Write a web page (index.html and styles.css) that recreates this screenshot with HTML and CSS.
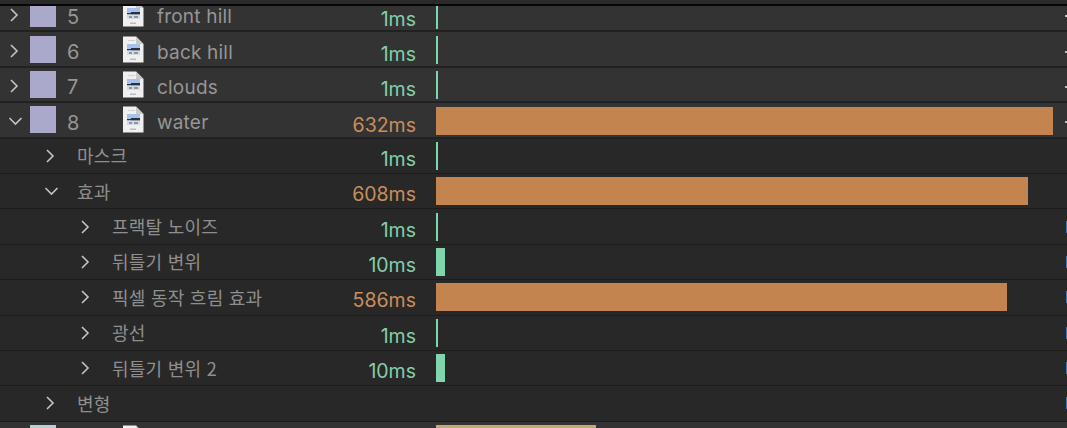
FILE: index.html
```html
<!DOCTYPE html>
<html lang="ko">
<head>
<meta charset="UTF-8">
<meta name="viewport" content="width=device-width, initial-scale=1.0">
<title>Render timing</title>
<link rel="stylesheet" href="styles.css">
</head>
<body>

<!-- shared icons -->
<svg class="defs" width="0" height="0">
  <symbol id="file" viewBox="0 0 22 27">
    <path d="M1 0.5H14L21.5 8V26.5H1Z" fill="#f0f0f0"/>
    <path d="M14 0.5V8H21.5Z" fill="#c9c9c9"/>
    <rect x="6" y="4" width="7" height="1" fill="#d2d2d2"/>
    <rect x="5" y="8" width="13" height="5" fill="#a6c2ec"/>
    <rect x="5" y="13" width="13" height="1.5" fill="#2a3040"/>
    <rect x="9" y="12" width="9" height="2.5" fill="#2a3040"/>
    <rect x="5" y="14.5" width="13" height="4.5" fill="#d5dbe4"/>
    <rect x="7" y="16" width="3" height="2" fill="#8e96a3"/>
    <rect x="12" y="16" width="4" height="2" fill="#8e96a3"/>
    <rect x="8" y="22.5" width="6" height="1.5" fill="#bcbcbc"/>
  </symbol>
  <symbol id="closed" viewBox="0 0 16 16">
    <path d="M5 2L11 8L5 14" fill="none" stroke="currentColor" stroke-width="1.6"/>
  </symbol>
  <symbol id="open" viewBox="0 0 16 16" overflow="visible">
    <path d="M3.5 5L9.5 11L15.5 5" fill="none" stroke="currentColor" stroke-width="1.6"/>
  </symbol>
</svg>

<div class="top-strip"></div>

<div class="rows">
  <div class="row layer">
    <div class="name">
      <svg class="twirl"><use href="#closed"/></svg>
      <span class="swatch"></span><span class="num">5</span>
      <svg class="file"><use href="#file"/></svg>
      <span class="label">front hill</span>
    </div>
    <div class="time fast">1ms</div>
    <div class="track"><span class="bar fast" style="width:2px"></span><span class="tick"></span></div>
  </div>
  <div class="row layer">
    <div class="name">
      <svg class="twirl"><use href="#closed"/></svg>
      <span class="swatch"></span><span class="num">6</span>
      <svg class="file"><use href="#file"/></svg>
      <span class="label">back hill</span>
    </div>
    <div class="time fast">1ms</div>
    <div class="track"><span class="bar fast" style="width:2px"></span><span class="tick"></span></div>
  </div>
  <div class="row layer">
    <div class="name">
      <svg class="twirl"><use href="#closed"/></svg>
      <span class="swatch"></span><span class="num">7</span>
      <svg class="file"><use href="#file"/></svg>
      <span class="label">clouds</span>
    </div>
    <div class="time fast">1ms</div>
    <div class="track"><span class="bar fast" style="width:2px"></span><span class="tick"></span></div>
  </div>
  <div class="row layer">
    <div class="name">
      <svg class="twirl"><use href="#open"/></svg>
      <span class="swatch"></span><span class="num">8</span>
      <svg class="file"><use href="#file"/></svg>
      <span class="label">water</span>
    </div>
    <div class="time slow">632ms</div>
    <div class="track"><span class="bar slow" style="width:617px"></span><span class="tick"></span></div>
  </div>

  <div class="row sub depth1">
    <div class="name">
      <svg class="twirl"><use href="#closed"/></svg>
      <span class="label">마스크</span>
    </div>
    <div class="time fast">1ms</div>
    <div class="track"><span class="bar fast" style="width:2px"></span></div>
  </div>
  <div class="row sub depth1">
    <div class="name">
      <svg class="twirl"><use href="#open"/></svg>
      <span class="label">효과</span>
    </div>
    <div class="time slow">608ms</div>
    <div class="track"><span class="bar slow" style="width:592px"></span></div>
  </div>
  <div class="row sub depth2">
    <div class="name">
      <svg class="twirl"><use href="#closed"/></svg>
      <span class="label">프랙탈 노이즈</span>
    </div>
    <div class="time fast">1ms</div>
    <div class="track"><span class="bar fast" style="width:2px"></span><span class="tick blue"></span></div>
  </div>
  <div class="row sub depth2">
    <div class="name">
      <svg class="twirl"><use href="#closed"/></svg>
      <span class="label">뒤틀기 변위</span>
    </div>
    <div class="time fast">10ms</div>
    <div class="track"><span class="bar fast" style="width:9px"></span><span class="tick blue"></span></div>
  </div>
  <div class="row sub depth2">
    <div class="name">
      <svg class="twirl"><use href="#closed"/></svg>
      <span class="label">픽셀 동작 흐림 효과</span>
    </div>
    <div class="time slow">586ms</div>
    <div class="track"><span class="bar slow" style="width:571px"></span><span class="tick blue"></span></div>
  </div>
  <div class="row sub depth2">
    <div class="name">
      <svg class="twirl"><use href="#closed"/></svg>
      <span class="label">광선</span>
    </div>
    <div class="time fast">1ms</div>
    <div class="track"><span class="bar fast" style="width:2px"></span><span class="tick blue"></span></div>
  </div>
  <div class="row sub depth2">
    <div class="name">
      <svg class="twirl"><use href="#closed"/></svg>
      <span class="label">뒤틀기 변위 2</span>
    </div>
    <div class="time fast">10ms</div>
    <div class="track"><span class="bar fast" style="width:9px"></span><span class="tick blue"></span></div>
  </div>
  <div class="row sub depth1">
    <div class="name">
      <svg class="twirl"><use href="#closed"/></svg>
      <span class="label">변형</span>
    </div>
    <div class="time"></div>
    <div class="track"><span class="tick blue"></span></div>
  </div>

  <!-- next layer, cut off by the window -->
  <div class="row layer next">
    <div class="name">
      <svg class="twirl"><use href="#closed"/></svg>
      <span class="swatch"></span><span class="num"></span>
      <svg class="file"><use href="#file"/></svg>
    </div>
    <div class="time"></div>
    <div class="track"><span class="bar tan" style="width:160px"></span></div>
  </div>
</div>

</body>
</html>
```

FILE: styles.css
```css
html, body {
  margin: 0;
  padding: 0;
  height: 100%;
  overflow: hidden;
  background-color: #2b2b2b;
}
body {
  display: flex;
  flex-direction: column;
  font-family: Inter, "Liberation Sans", "Noto Sans CJK KR", sans-serif;
}
.defs {
  position: absolute;
}
.top-strip {
  flex: none;
  height: 4px;
  background-color: #2a2a2a;
  border-bottom: 2px solid #060606;
}
.rows {
  flex: 1;
  overflow: hidden;
}
.row {
  display: flex;
  align-items: center;
  box-sizing: border-box;
  height: 35.4px;
  border-bottom: 2px solid #212121;
}
.row:first-child {
  margin-top: -9px;
}
.layer {
  background-color: #333333;
}
.sub {
  background-color: #282828;
  border-bottom-width: 1px;
  border-bottom-color: #1c1c1c;
}
.name {
  display: flex;
  align-items: center;
  flex: none;
  width: 340px;
  height: 100%;
  color: #969696;
}
.twirl {
  flex: none;
  width: 16px;
  height: 16px;
  color: #c4c4c4;
  overflow: visible;
}
.layer .twirl {
  margin-left: 6px;
  margin-right: 8px;
  margin-top: 3px;
}
.depth1 .twirl {
  margin-left: 42px;
  margin-right: 19px;
}
.depth2 .twirl {
  margin-left: 77px;
  margin-right: 19px;
}
.swatch {
  flex: none;
  width: 26px;
  height: 27px;
  background-color: #aaa9cb;
}
.num {
  flex: none;
  width: 55px;
  margin-left: 11px;
  padding-top: 6px;
  font-size: 20px;
}
.file {
  flex: none;
  width: 22px;
  height: 27px;
}
.label {
  margin-left: 13px;
  padding-top: 6px;
  font-size: 19px;
  letter-spacing: 0.2px;
  white-space: nowrap;
}
.sub .label {
  margin-left: 0;
  padding-top: 0;
  padding-bottom: 1px;
  font-size: 18px;
  letter-spacing: 0.25px;
  font-family: "Noto Sans CJK KR", sans-serif;
  color: #8f8f8f;
}
.time {
  flex: none;
  width: 76px;
  margin-right: 20px;
  padding-top: 6px;
  text-align: right;
  font-size: 19.5px;
}
.layer .time {
  padding-top: 10px;
}
.time.fast {
  color: #82cfaa;
}
.time.slow {
  color: #c98e5c;
}
.track {
  display: flex;
  align-items: center;
  flex: 1;
  height: 100%;
}
.bar {
  display: block;
  height: 28px;
}
.layer .bar {
  margin-top: 2px;
}
.bar.fast {
  background-color: #7fd6ad;
}
.bar.slow {
  background-color: #c3844f;
}
.next .bar.tan {
  margin-top: 0;
  background-color: #c2a876;
}
.tick {
  width: 2px;
  height: 2px;
  margin-left: auto;
  margin-top: 5px;
  background-color: #bdbdbd;
}
.tick.blue {
  width: 1px;
  height: 12px;
  margin-top: 0;
  background-color: #3f79b8;
}
.next .swatch {
  background-color: #b5d0cf;
}
.next {
  align-items: flex-start;
}
.next .name {
  align-items: flex-start;
  padding-top: 3px;
  box-sizing: border-box;
}
.next .track {
  align-items: flex-start;
  padding-top: 3px;
  box-sizing: border-box;
}
```
